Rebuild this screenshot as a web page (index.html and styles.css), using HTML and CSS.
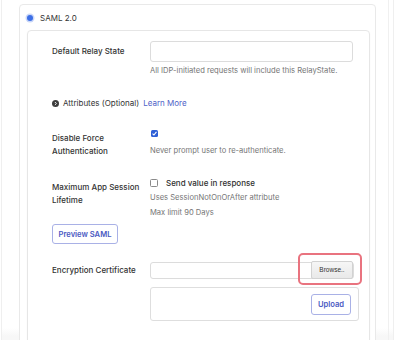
FILE: index.html
```html
<!DOCTYPE html>
<html lang="en">
<head>
  <meta charset="UTF-8">
  <title>SAML 2.0 Settings</title>
  <link rel="stylesheet" href="styles.css">
</head>
<body>
  <div class="frame">
    <div class="frame-inner">
      <div class="card">
        <!-- Sign-on method header -->
        <div class="card-head">
          <span class="radio"></span>
          <span class="head-title">SAML 2.0</span>
        </div>

        <div class="settings">
          <!-- Relay state -->
          <div class="row row-relay">
            <div class="label">Default Relay State</div>
            <div class="control">
              <div class="input"></div>
              <div class="help">All IDP-initiated requests will include this RelayState.</div>
            </div>
          </div>

          <!-- Attributes -->
          <div class="attributes">
            <svg class="toggle-icon" width="7" height="7" viewBox="0 0 12 12">
              <circle cx="6" cy="6" r="6" fill="#3d3d3d"/>
              <path d="M5 3.5 L7.5 6 L5 8.5" stroke="#fff" stroke-width="1.6" fill="none"/>
            </svg>
            <span>Attributes (Optional)</span>
            <a class="link" href="#">Learn More</a>
          </div>

          <!-- Force auth -->
          <div class="row row-force">
            <div class="label">Disable Force<br>Authentication</div>
            <div class="control">
              <span class="check checked">
                <svg width="7" height="7" viewBox="0 0 10 10"><path d="M2.2 5.2 L4.2 7.2 L7.8 2.8" stroke="#fff" stroke-width="1.6" fill="none"/></svg>
              </span>
              <div class="help help-force">Never prompt user to re-authenticate.</div>
            </div>
          </div>

          <!-- Session lifetime -->
          <div class="row row-session">
            <div class="label">Maximum App Session<br>Lifetime</div>
            <div class="control">
              <div class="check-line">
                <span class="check"></span>
                <span class="check-text">Send value in response</span>
              </div>
              <div class="help help-uses">Uses SessionNotOnOrAfter attribute</div>
              <div class="help help-limit">Max limit 90 Days</div>
            </div>
          </div>

          <button class="btn btn-preview">Preview SAML</button>

          <!-- Certificate -->
          <div class="row row-cert">
            <div class="label">Encryption Certificate</div>
            <div class="control">
              <div class="file-input">
                <span class="browse">Browse..</span>
                <span class="highlight"></span>
              </div>
              <div class="upload-box">
                <button class="btn btn-upload">Upload</button>
              </div>
            </div>
          </div>
        </div>
      </div>
    </div>
  </div>
</body>
</html>
```

FILE: styles.css
```css
body {
  margin: 0;
  background-color: #fff;
  font-family: Inter, "Noto Sans", sans-serif;
  color: #2f2f2f;
}

.frame {
  margin-left: 1px;
  width: 393px;
  height: 340px;
  box-sizing: border-box;
  border-left: 1px solid #efefef;
  border-right: 1px solid #efefef;
  overflow: hidden;
  background: linear-gradient(to bottom, #fff 328px, #f7f7f7 336px);
}

.frame-inner {
  height: 100%;
  box-sizing: border-box;
  margin-right: 4px;
  border-right: 1px solid #f0f0f0;
  padding: 4px 12px 0 17px;
}

.card {
  border: 1px solid #e9e9e9;
  border-radius: 4px;
  padding: 0 5px 0 7px;
  height: 400px;
  background-color: #fff;
}

.card-head {
  display: flex;
  align-items: center;
  height: 25px;
}

.radio {
  width: 6px;
  height: 6px;
  margin-left: 0;
  border-radius: 50%;
  background-color: #3d6fe6;
  box-shadow: 0 0 0 1.5px #cbd8f8;
}

.head-title {
  margin-left: 7px;
  font-size: 8px;
  color: #333;
}

.settings {
  border: 1px solid #e6e6e6;
  border-radius: 4px;
  box-shadow: 0 1px 2px rgba(0, 0, 0, 0.04);
  padding: 10px 16px 0 24px;
  height: 400px;
}

.row {
  display: flex;
}

.label {
  width: 98px;
  flex-shrink: 0;
  font-size: 8px;
  font-weight: 500;
  line-height: 13px;
  color: #333;
}

.control {
  flex: 1;
}

.input {
  height: 19px;
  border: 1px solid #dcdcdc;
  border-radius: 3px;
}

.help {
  font-size: 7.6px;
  line-height: 10px;
  color: #767676;
}

.row-relay .label {
  padding-top: 4px;
}

.row-relay .help {
  margin-top: 4px;
}

.attributes {
  display: flex;
  align-items: center;
  gap: 4px;
  margin-top: 22px;
  font-size: 8px;
  color: #333;
}

.link {
  margin-left: 0;
  color: #4f5fc7;
  text-decoration: none;
}

.row-force {
  margin-top: 22px;
}

.row-force .label {
  padding-top: 2px;
}

.check {
  display: flex;
  align-items: center;
  justify-content: center;
  width: 6px;
  height: 6px;
  border: 1px solid #8a8a8a;
  border-radius: 1.5px;
  background-color: #fff;
}

.check.checked {
  width: 7px;
  height: 7px;
  margin-left: 1px;
  border: none;
  background-color: #2e5fd6;
}

.help-force {
  margin-top: 9px;
}

.row-session {
  margin-top: 20px;
}

.row-session .label {
  padding-top: 3px;
}

.check-line {
  display: flex;
  align-items: center;
  height: 10px;
}

.check-text {
  margin-left: 8px;
  font-size: 8px;
  font-weight: 500;
  color: #2f2f2f;
}

.help-uses {
  margin-top: 5px;
}

.help-limit {
  margin-top: 5px;
}

.btn {
  font-family: Inter, "Noto Sans", sans-serif;
  font-weight: 600;
  color: #4a59c2;
  background-color: #fff;
  border: 1px solid #a9b1e6;
  border-radius: 3px;
  cursor: pointer;
}

.btn-preview {
  display: block;
  margin-top: 6px;
  width: 66px;
  height: 20px;
  padding: 0;
  font-size: 7.6px;
}

.row-cert {
  margin-top: 18px;
}

.row-cert .label {
  padding-top: 2px;
}

.file-input {
  position: relative;
  display: flex;
  justify-content: flex-end;
  align-items: center;
  height: 15px;
  border: 1px solid #dcdcdc;
  border-radius: 3px;
  width: 202px;
}

.browse {
  display: flex;
  align-items: center;
  justify-content: center;
  margin-top: -2px;
  width: 40px;
  height: 16px;
  border: 1px solid #d2d2d2;
  border-radius: 2px;
  background: linear-gradient(#f6f6f6, #e9e9e9);
  font-family: "Liberation Sans", Arial, sans-serif;
  font-size: 6.5px;
  color: #333;
}

.highlight {
  position: absolute;
  left: 147px;
  top: -10px;
  width: 60px;
  height: 28px;
  border: 2px solid #e9737f;
  border-radius: 5px;
}

.upload-box {
  display: flex;
  justify-content: flex-end;
  align-items: center;
  margin-top: 8px;
  width: 184px;
  height: 32px;
  padding: 0 7px 0 16px;
  border: 1px solid #dedede;
  border-radius: 3px;
}

.btn-upload {
  width: 40px;
  height: 21px;
  padding: 0;
  font-size: 7.6px;
}
```
